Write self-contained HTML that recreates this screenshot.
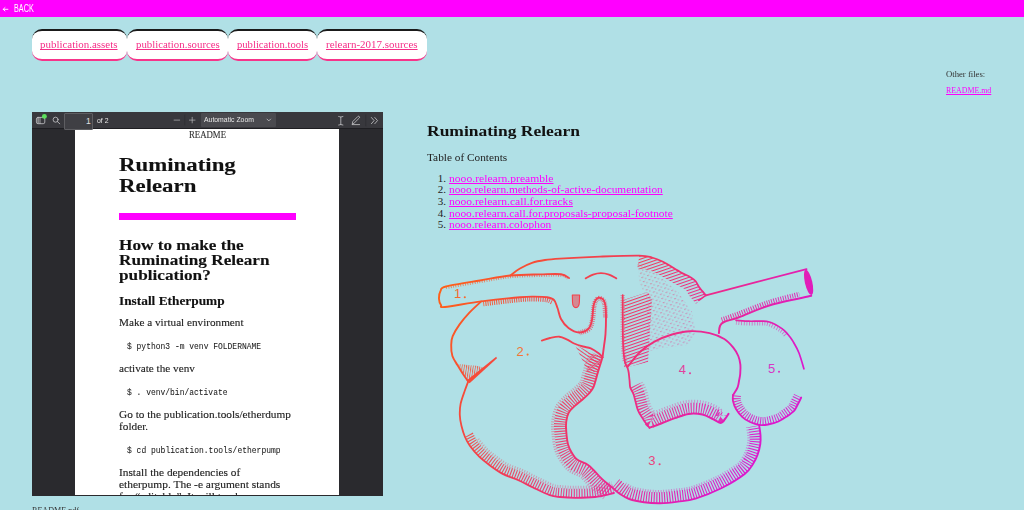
<!DOCTYPE html>
<html><head><meta charset="utf-8"><title>Ruminating Relearn</title>
<style>
html,body{margin:0;padding:0}
body{width:1024px;height:510px;overflow:hidden;background:#b0e0e6;position:relative;font-family:"Liberation Serif",serif}
.t{position:absolute;white-space:pre;line-height:normal;transform-origin:0 0;text-decoration-skip-ink:none}
#page .t{-webkit-text-stroke:0.12px currentColor}
#bar{position:absolute;left:0;top:0;width:1024px;height:16.6px;background:#f0f}
.tab{position:absolute;top:29px;height:28px;background:#fff;border-top:2px solid #1a1a1a;border-bottom:2.3px solid #f7348a;border-radius:10px;box-sizing:content-box}
#viewer{position:absolute;left:31.5px;top:111.5px;width:351.5px;height:384px;background:#2a2a2e;overflow:hidden}
#page{position:absolute;left:75px;top:129px;width:264px;height:366.4px;background:#fff;overflow:hidden}
#rule{position:absolute;left:44px;top:84.3px;width:177px;height:6.5px;background:#f0f}
</style></head><body>
<div id="bar"></div>
<svg style="position:absolute;left:0;top:0" width="12" height="16" viewBox="0 0 12 16" fill="none" stroke="#fff" stroke-width="0.9" stroke-linecap="round"><path d="M3.2,9.3 H7.9 M5,7.6 L3.2,9.3 L5,11"/></svg>
<div class="tab" style="left:31.5px;width:95px"></div>
<div class="tab" style="left:126.5px;width:101.5px"></div>
<div class="tab" style="left:228px;width:89px"></div>
<div class="tab" style="left:317px;width:109.5px"></div>
<div id="viewer"><div style="position:absolute;left:0;top:0;width:351.5px;height:16px;background:#38383d;box-shadow:0 0.6px 0 #18181b"></div>
<div style="position:absolute;left:32.8px;top:1.9px;width:29px;height:16.3px;z-index:2;box-sizing:border-box;background:#3f3f44;border:0.8px solid #5e5e62;border-radius:1px"></div>
<div style="position:absolute;left:169.6px;top:1.3px;width:74.7px;height:14.6px;background:#4a4a4f;border-radius:1px"></div>
<svg style="position:absolute;left:0;top:0" width="351.5" height="20" viewBox="31.5 111.5 351.5 20" fill="none" stroke="#cfcfd1" stroke-width="0.75" stroke-linecap="round">
<rect x="35.9" y="116.9" width="8.4" height="6.3" rx="1.6"/>
<path d="M39.6,117 V123.1 M37.3,117.6 V122.6 M38.3,117.6 V122.6" stroke-width="0.6"/>
<circle cx="43.9" cy="115.9" r="2.45" fill="#5cdf5c" stroke="none"/>
<circle cx="55.1" cy="119.2" r="2.5"/>
<path d="M56.9,121.1 L59.3,123.3"/>
<path d="M173.6,119.6 H179.2" stroke-width="0.6"/>
<path d="M184.3,114.5 V124.5" stroke="#2c2c30" stroke-width="0.7"/>
<path d="M188.9,119.6 H194.5 M191.7,116.8 V122.4" stroke-width="0.6"/>
<path d="M266.5,118.6 L268.3,120.4 L270.1,118.6"/>
<path d="M338.2,116 Q339.3,116.2 340.3,116.6 Q341.3,116.2 342.4,116 M340.3,116.6 V124 M338.2,124.5 Q339.3,124.3 340.3,124 Q341.3,124.3 342.4,124.5"/>
<path d="M351.8,123.4 L352.3,121 L357.3,116 Q358.1,115.4 358.8,116.1 Q359.4,116.8 358.8,117.5 L353.8,122.5 Z M351.7,124.1 H359.1"/>
<path d="M365.3,114.4 V125.3" stroke="#2c2c30" stroke-width="0.7"/>
<path d="M370.9,117 L373.6,120.1 L370.9,123.2 M374.3,117 L377,120.1 L374.3,123.2"/>
</svg>
</div>
<div id="page"><div id="rule"></div>
<div class="t" style="left:114.00px;top:0.00px;font-size:9.9px;color:#333;transform:scaleX(0.8881);">README</div>
<div class="t" style="left:44.40px;top:24.30px;font-size:19.8px;color:#111;font-weight:700;transform:scaleX(1.1547);">Ruminating</div>
<div class="t" style="left:44.40px;top:44.80px;font-size:19.8px;color:#111;font-weight:700;transform:scaleX(1.1547);">Relearn</div>
<div class="t" style="left:44.40px;top:108.00px;font-size:14.3px;color:#111;font-weight:700;transform:scaleX(1.2034);">How to make the</div>
<div class="t" style="left:44.40px;top:123.20px;font-size:14.3px;color:#111;font-weight:700;transform:scaleX(1.2034);">Ruminating Relearn</div>
<div class="t" style="left:44.40px;top:138.30px;font-size:14.3px;color:#111;font-weight:700;transform:scaleX(1.2034);">publication?</div>
<div class="t" style="left:44.40px;top:164.80px;font-size:12.65px;color:#111;font-weight:700;transform:scaleX(1.0553);">Install Etherpump</div>
<div class="t" style="left:44.40px;top:188.00px;font-size:10.56px;color:#222;transform:scaleX(1.0603);">Make a virtual environment</div>
<div class="t" style="left:52.00px;top:212.49px;font-size:8px;color:#1a1a1a;font-family:'Liberation Mono', monospace;transform:scale(0.9976,1.1300);-webkit-text-stroke:0.05px #1a1a1a;">$ python3 -m venv FOLDERNAME</div>
<div class="t" style="left:44.40px;top:234.00px;font-size:10.56px;color:#222;transform:scaleX(1.0613);">activate the venv</div>
<div class="t" style="left:52.00px;top:257.79px;font-size:8px;color:#1a1a1a;font-family:'Liberation Mono', monospace;transform:scale(0.9969,1.1300);-webkit-text-stroke:0.05px #1a1a1a;">$ . venv/bin/activate</div>
<div class="t" style="left:44.40px;top:280.40px;font-size:10.56px;color:#222;transform:scaleX(1.0708);">Go to the publication.tools/etherdump</div>
<div class="t" style="left:44.40px;top:292.30px;font-size:10.56px;color:#222;transform:scaleX(1.0708);">folder.</div>
<div class="t" style="left:52.00px;top:315.99px;font-size:8px;color:#1a1a1a;font-family:'Liberation Mono', monospace;transform:scale(0.9998,1.1300);-webkit-text-stroke:0.05px #1a1a1a;">$ cd publication.tools/etherpump</div>
<div class="t" style="left:44.40px;top:338.30px;font-size:10.56px;color:#222;transform:scaleX(1.0756);">Install the dependencies of</div>
<div class="t" style="left:44.40px;top:349.70px;font-size:10.56px;color:#222;transform:scaleX(1.0848);">etherpump. The -e argument stands</div>
<div class="t" style="left:44.40px;top:362.00px;font-size:10.56px;color:#222;transform:scaleX(1.0848);">for “editable”. It will track...</div>
</div>
<div class="t" style="left:13.60px;top:2.30px;font-size:9.4px;color:#fff;font-family:'Liberation Sans', sans-serif;transform:scale(0.7726,1.1000);">BACK</div>
<div class="t" style="left:40.10px;top:38.90px;font-size:9.9px;color:#f52d87;transform:scaleX(1.1085);text-decoration:underline;">publication.assets</div>
<div class="t" style="left:135.50px;top:38.90px;font-size:9.9px;color:#f52d87;transform:scaleX(1.0956);text-decoration:underline;">publication.sources</div>
<div class="t" style="left:237.00px;top:38.90px;font-size:9.9px;color:#f52d87;transform:scaleX(1.0753);text-decoration:underline;">publication.tools</div>
<div class="t" style="left:325.75px;top:38.90px;font-size:9.9px;color:#f52d87;transform:scaleX(1.1096);text-decoration:underline;">relearn-2017.sources</div>
<div class="t" style="left:427.40px;top:122.20px;font-size:15.4px;color:#111;font-weight:700;transform:scaleX(1.1361);">Ruminating Relearn</div>
<div class="t" style="left:427.40px;top:150.90px;font-size:11.0px;color:#222;transform:scaleX(1.0274);">Table of Contents</div>
<div class="t" style="left:437.80px;top:171.50px;font-size:11.0px;color:#222;">1.</div>
<div class="t" style="left:448.60px;top:171.50px;font-size:11.0px;color:#f0f;transform:scaleX(1.0558);text-decoration:underline;">nooo.relearn.preamble</div>
<div class="t" style="left:437.80px;top:183.23px;font-size:11.0px;color:#222;">2.</div>
<div class="t" style="left:448.60px;top:183.23px;font-size:11.0px;color:#f0f;transform:scaleX(1.0323);text-decoration:underline;">nooo.relearn.methods-of-active-documentation</div>
<div class="t" style="left:437.80px;top:194.96px;font-size:11.0px;color:#222;">3.</div>
<div class="t" style="left:448.60px;top:194.96px;font-size:11.0px;color:#f0f;transform:scaleX(1.0509);text-decoration:underline;">nooo.relearn.call.for.tracks</div>
<div class="t" style="left:437.80px;top:206.69px;font-size:11.0px;color:#222;">4.</div>
<div class="t" style="left:448.60px;top:206.69px;font-size:11.0px;color:#f0f;transform:scaleX(1.0377);text-decoration:underline;">nooo.relearn.call.for.proposals-proposal-footnote</div>
<div class="t" style="left:437.80px;top:218.42px;font-size:11.0px;color:#222;">5.</div>
<div class="t" style="left:448.60px;top:218.42px;font-size:11.0px;color:#f0f;transform:scaleX(1.0335);text-decoration:underline;">nooo.relearn.colophon</div>
<div class="t" style="left:946.00px;top:68.60px;font-size:8.8px;color:#333;transform:scaleX(0.9854);">Other files:</div>
<div class="t" style="left:946.00px;top:84.50px;font-size:8.8px;color:#f0f;transform:scaleX(0.8948);text-decoration:underline;">README.md</div>
<div class="t" style="left:31.80px;top:504.80px;font-size:8.8px;color:#333;transform:scaleX(0.9191);">README.pdf</div>
<div class="t" style="left:96.70px;top:115.80px;font-size:7.5px;color:#e8e8e8;font-family:'Liberation Sans', sans-serif;transform:scaleX(0.9158);">of 2</div>
<div class="t" style="left:86.00px;top:116.30px;font-size:8.6px;color:#e0e0e0;font-family:'Liberation Sans', sans-serif;z-index:3;">1</div>
<div class="t" style="left:204.30px;top:115.20px;font-size:7.5px;color:#e8e8e8;font-family:'Liberation Sans', sans-serif;transform:scaleX(0.9144);">Automatic Zoom</div>
<svg width="1024" height="510" viewBox="0 0 1024 510" style="position:absolute;left:0;top:0" fill="none" stroke-linecap="round" stroke-linejoin="round">
<defs>
<linearGradient id="g" gradientUnits="userSpaceOnUse" x1="440" y1="293" x2="739.3" y2="466.6">
<stop offset="0" stop-color="#ff6018"/><stop offset="0.225" stop-color="#f54a3c"/><stop offset="0.45" stop-color="#f03a5a"/><stop offset="0.675" stop-color="#ec2a8a"/><stop offset="1" stop-color="#dc18cc"/>
</linearGradient>
<pattern id="p1" width="10" height="3" patternUnits="userSpaceOnUse" patternTransform="rotate(-19)"><rect width="10" height="1.05" fill="#fff"/></pattern>
<pattern id="p2" width="3" height="10" patternUnits="userSpaceOnUse" patternTransform="rotate(-55)"><rect width="1" height="10" fill="#fff"/></pattern>
<pattern id="pd" width="6" height="4.4" patternUnits="userSpaceOnUse" patternTransform="rotate(-19)"><rect width="2.2" height="1.1" fill="#fff"/><rect x="3" y="2.2" width="1.5" height="1" fill="#fff"/></pattern>
<mask id="m1" maskUnits="userSpaceOnUse" x="0" y="0" width="1024" height="510"><rect width="1024" height="510" fill="url(#p1)"/></mask>
<mask id="m2" maskUnits="userSpaceOnUse" x="0" y="0" width="1024" height="510"><rect width="1024" height="510" fill="url(#p2)"/></mask>
<pattern id="p3" width="2.2" height="10" patternUnits="userSpaceOnUse" patternTransform="rotate(8)"><rect width="0.9" height="10" fill="#fff"/></pattern>
<mask id="m3" maskUnits="userSpaceOnUse" x="0" y="0" width="1024" height="510"><rect width="1024" height="510" fill="url(#p3)"/></mask>
<mask id="md" maskUnits="userSpaceOnUse" x="0" y="0" width="1024" height="510"><rect width="1024" height="510" fill="url(#pd)"/></mask>
</defs>
<g stroke="url(#g)">
<path stroke-width="1.9" d="M569.0,278.0 C567.7,277.4 565.8,274.8 561.0,274.2 C556.2,273.6 548.5,274.2 540.0,274.4 C531.5,274.6 520.3,274.5 510.3,275.5 C500.3,276.5 490.7,278.7 480.0,280.5 C469.3,282.3 452.6,284.8 446.0,286.5 C439.4,288.2 441.7,288.9 440.5,291.0 C439.3,293.1 438.9,296.7 439.0,299.0 C439.1,301.3 440.0,303.7 441.0,305.0 C442.0,306.3 438.3,307.6 445.0,307.0 C451.7,306.4 468.7,303.0 481.2,301.4 C493.7,299.8 511.1,298.0 520.0,297.2 C528.9,296.4 530.0,296.6 534.5,296.6 C539.0,296.6 543.8,296.6 547.0,297.2 C550.2,297.8 552.2,298.2 554.0,300.0 C555.8,301.8 556.3,304.8 557.5,308.0 C558.7,311.2 559.2,315.7 561.0,319.0 C562.8,322.3 565.5,325.8 568.5,328.0 C571.5,330.2 575.7,332.4 579.0,332.5 C582.3,332.6 586.3,330.9 588.5,328.8 C590.7,326.7 591.2,323.8 592.0,320.0 C592.8,316.2 592.8,309.4 593.5,306.0 C594.2,302.6 595.0,300.9 596.0,299.5 C597.0,298.1 598.2,297.7 599.5,297.8 C600.8,297.9 602.5,298.6 603.5,300.0 C604.5,301.4 605.1,303.0 605.5,306.0 C605.9,309.0 606.0,313.3 606.0,318.0 C606.0,322.7 605.8,329.3 605.5,334.0 C605.2,338.7 604.5,342.1 604.0,346.0 C603.5,349.9 602.8,355.4 602.5,357.3"/>
<path stroke-width="1.9" d="M602.5,357.3 C602.0,358.9 600.5,363.9 599.5,367.0 C598.5,370.1 597.8,372.8 596.8,376.1 C595.8,379.4 594.8,384.1 593.5,387.0 C592.2,389.9 590.9,391.3 589.0,393.5 C587.1,395.7 584.4,397.9 582.0,400.0 C579.6,402.1 577.0,403.7 574.8,405.9 C572.5,408.1 569.9,410.3 568.5,413.0 C567.1,415.7 566.6,418.8 566.2,422.0 C565.8,425.2 565.9,428.1 566.3,432.0 C566.6,435.9 567.3,441.8 568.3,445.3 C569.2,448.8 570.5,450.6 572.0,453.0 C573.5,455.4 574.5,457.5 577.1,459.5 C579.7,461.5 584.9,463.0 587.7,464.8 C590.5,466.6 591.9,468.4 594.0,470.5 C596.1,472.6 598.1,475.1 600.1,477.1 C602.1,479.1 604.0,480.7 606.0,482.5 C608.0,484.3 610.1,485.8 612.4,487.7 C614.7,489.6 617.2,492.1 620.0,494.0 C622.8,495.9 625.2,497.6 629.2,499.0 C633.2,500.4 638.9,501.5 644.0,502.2 C649.1,502.9 654.3,503.3 660.0,503.2 C665.7,503.1 672.1,502.4 678.0,501.6 C683.9,500.8 688.2,500.9 695.5,498.6 C702.8,496.3 713.6,492.1 721.8,488.0 C730.0,483.9 739.5,478.0 744.7,474.0 C749.9,470.0 750.9,467.2 753.0,464.0 C755.1,460.8 756.3,458.3 757.5,455.0 C758.7,451.7 759.8,447.3 760.3,444.0 C760.8,440.7 760.7,438.4 760.5,435.3 C760.3,432.2 759.4,427.1 759.2,425.5"/>
<path stroke-width="1.8" d="M510.3,275.5 C511.9,274.3 516.4,270.6 520.0,268.5 C523.6,266.4 527.8,264.2 532.0,262.8 C536.2,261.4 540.3,260.7 545.0,260.0 C549.7,259.3 550.8,259.2 560.0,258.6 C569.2,258.0 586.8,257.1 600.0,256.6 C613.2,256.1 630.6,255.4 639.3,255.6 C648.0,255.8 648.0,256.5 652.0,257.5 C656.0,258.5 658.2,259.4 663.0,261.8 C667.8,264.2 676.1,269.7 680.6,272.2 C685.1,274.7 687.5,275.5 690.0,277.0 C692.5,278.5 693.9,279.2 695.5,281.0 C697.1,282.8 697.7,285.2 699.4,287.6 C701.1,290.0 704.8,294.0 705.9,295.3"/>
<path stroke-width="1.8" d="M705.9,295.3 C722.7,290.9 789.7,273.5 806.5,269.1"/>
<path stroke-width="1.6" d="M705.9,295.3 C704.7,296.1 700.0,299.5 698.8,300.3"/>
<path stroke-width="2" d="M811.2,295.8 C804.3,297.4 782.0,301.6 770.0,305.2 C758.0,308.8 746.7,314.4 739.0,317.2 C731.3,320.0 727.2,320.5 724.0,322.0 C720.8,323.5 720.9,324.1 720.0,326.0 C719.1,327.9 719.1,331.9 718.9,333.1"/>
<path stroke-width="1.7" d="M736.1,320.4 C738.2,320.5 744.8,321.1 748.8,321.2 C752.8,321.3 756.6,321.1 760.0,321.2 C763.4,321.3 765.7,320.8 769.4,322.0 C773.1,323.2 778.9,326.5 782.0,328.6 C785.1,330.7 786.2,332.4 788.0,334.5 C789.8,336.6 791.2,338.3 793.0,341.4 C794.8,344.5 797.2,348.4 799.0,353.0 C800.8,357.6 803.1,366.2 803.9,368.8"/>
<path stroke-width="1.8" d="M801.2,397.5 C800.6,398.8 798.7,402.8 797.5,405.0 C796.3,407.2 796.0,408.8 794.1,410.8 C792.2,412.8 788.6,415.2 786.0,417.0 C783.4,418.8 781.4,420.2 778.4,421.5 C775.4,422.8 771.1,423.9 768.0,424.5 C764.9,425.1 762.6,425.3 759.6,424.9 C756.6,424.5 752.9,423.3 750.0,422.0 C747.1,420.7 744.7,419.3 742.4,417.1 C740.1,414.9 737.6,411.7 736.0,409.0 C734.4,406.3 733.5,403.3 733.0,401.0 C732.5,398.7 733.0,396.1 733.0,395.1"/>
<path stroke-width="1.9" d="M627.5,366.9 C629.6,364.4 635.6,356.2 640.0,352.0 C644.4,347.8 648.7,344.7 654.0,341.8 C659.3,338.9 666.0,336.3 672.0,334.5 C678.0,332.7 683.9,331.4 690.2,331.2 C696.5,331.0 703.9,331.8 709.6,333.1 C715.3,334.4 720.3,336.6 724.3,339.0 C728.2,341.4 731.0,344.8 733.3,347.6 C735.6,350.4 737.1,353.1 738.3,356.0 C739.5,358.9 740.1,361.9 740.4,364.9 C740.7,367.9 740.4,371.3 740.2,374.0 C740.0,376.7 739.4,378.8 739.0,381.0 C738.6,383.2 738.6,384.9 737.6,387.3 C736.6,389.7 733.8,393.8 733.0,395.1"/>
<path stroke-width="1.8" d="M622.7,295.2 C622.7,301.0 622.7,320.9 622.8,330.0 C622.9,339.1 623.0,344.7 623.4,350.0 C623.8,355.3 624.2,358.7 625.0,362.0 C625.8,365.3 627.5,367.0 628.2,370.0 C629.0,373.0 629.1,377.0 629.5,380.0 C629.9,383.0 629.6,385.4 630.3,387.8 C631.0,390.2 632.5,391.0 633.7,394.7 C635.0,398.4 636.2,405.7 637.8,409.8 C639.4,413.9 641.3,416.4 643.3,419.4 C645.2,422.4 648.5,426.3 649.5,427.7"/>
<path stroke-width="2" d="M649.5,427.7 C651.5,427.0 657.0,425.1 661.2,423.5 C665.4,421.9 670.3,419.7 674.9,418.1 C679.5,416.5 684.1,414.5 688.7,413.9 C693.3,413.3 698.3,413.7 702.4,414.6 C706.5,415.5 710.3,418.0 713.4,419.4 C716.5,420.8 719.0,423.0 720.9,422.9 C722.8,422.8 723.7,420.5 725.0,419.0 C726.3,417.5 727.9,414.8 728.5,413.9"/>
<path stroke-width="1.9" d="M541.8,340.6 C543.2,340.2 547.1,338.6 550.0,338.0 C552.9,337.4 556.5,336.4 559.4,336.7 C562.3,337.0 564.8,338.5 567.3,339.6 C569.8,340.7 571.5,342.4 574.1,343.5 C576.7,344.6 580.2,345.7 583.0,346.5 C585.8,347.3 588.2,347.3 590.8,348.4 C593.4,349.5 596.6,351.8 598.6,353.3 C600.6,354.8 601.9,356.6 602.5,357.3"/>
<path stroke-width="1.9" d="M481.2,301.4 C479.2,303.3 473.0,308.8 469.4,312.6 C465.8,316.4 462.4,320.5 459.6,324.4 C456.8,328.3 454.1,332.8 452.7,336.2 C451.3,339.6 451.2,341.7 451.2,345.0 C451.1,348.3 451.3,352.6 452.4,356.0 C453.5,359.4 455.8,362.3 457.6,365.3 C459.4,368.3 461.2,371.3 463.0,374.0 C464.8,376.7 467.3,380.2 468.2,381.5"/>
<path stroke-width="1.8" d="M468.2,381.5 C467.6,383.2 465.8,387.8 464.5,391.5 C463.2,395.2 461.4,400.0 460.6,403.9 C459.8,407.8 459.7,411.2 459.8,414.9 C459.9,418.6 460.6,422.3 461.5,426.0 C462.4,429.7 463.6,433.7 465.0,437.0 C466.4,440.3 467.6,442.7 470.0,446.0 C472.4,449.3 475.9,453.4 479.2,456.7 C482.5,459.9 486.1,462.6 490.0,465.5 C493.9,468.4 498.0,471.4 502.7,473.9 C507.4,476.3 513.4,477.9 518.4,480.2 C523.4,482.5 527.8,485.0 533.0,487.5 C538.2,490.0 545.3,493.6 549.8,495.2 C554.3,496.8 555.8,496.6 560.0,497.0 C564.2,497.4 569.2,497.8 575.0,497.8 C580.8,497.8 588.5,497.8 595.0,497.0 C601.5,496.2 610.8,493.7 614.0,493.0"/>
<path stroke-width="1.9" d="M585.7,278.3 C586.9,277.7 590.5,275.5 593.0,274.6 C595.5,273.7 598.3,273.1 601.0,273.1 C603.7,273.1 606.5,273.7 609.0,274.6 C611.5,275.5 615.1,277.7 616.3,278.3"/>
</g>
<g stroke="url(#g)" stroke-linecap="butt" stroke-linejoin="miter">
<path stroke-width="5" stroke-dasharray="1 1.2" opacity="0.9" d="M483.3,303.8 C489.5,303.1 511.7,300.4 520.2,299.6 C528.8,298.8 530.1,299.0 534.5,299.0 C538.9,299.0 543.6,299.3 546.6,299.8 C549.5,300.3 551.2,301.6 552.1,301.9"/>
<path stroke-width="2.4" stroke-dasharray="0.8 1.6" opacity="0.75" d="M446.2,287.9 C451.9,286.9 469.6,283.7 480.2,281.9 C490.9,280.1 500.2,278.1 510.1,277.1 C520.1,276.1 531.6,276.0 540.0,275.8 C548.5,275.5 556.3,275.2 560.9,275.6 C565.4,276.0 566.4,277.8 567.5,278.3"/>
<path stroke-width="12" stroke-dasharray="1.1 1.4" opacity="0.9" d="M596.8,355.5 C596.3,357.1 594.7,362.1 593.8,365.3 C592.8,368.4 592.0,371.2 591.1,374.4 C590.1,377.6 589.1,382.0 588.0,384.5 C586.9,387.1 586.2,387.7 584.5,389.5 C582.8,391.3 580.4,393.5 578.1,395.5 C575.7,397.5 573.1,399.1 570.6,401.6 C568.2,404.0 564.9,406.9 563.2,410.2 C561.5,413.5 560.7,417.6 560.2,421.3 C559.8,425.0 559.9,428.3 560.3,432.5 C560.7,436.8 561.4,442.9 562.5,446.9 C563.6,450.8 565.1,453.3 566.9,456.2 C568.7,459.1 570.6,462.0 573.5,464.3 C576.4,466.6 581.7,468.1 584.4,469.8 C587.1,471.6 587.9,472.8 589.8,474.8 C591.7,476.7 593.8,479.3 595.9,481.3 C597.9,483.4 600.0,485.2 602.1,487.0 C604.2,488.9 607.5,491.5 608.6,492.4"/>
<path stroke-width="3" stroke-dasharray="1 1.5" opacity="0.45" d="M589.6,353.3 C589.1,354.9 587.5,359.9 586.6,363.1 C585.6,366.2 584.8,369.2 583.9,372.2 C583.0,375.3 582.0,379.4 581.2,381.5 C580.4,383.5 580.2,383.2 578.9,384.6 C577.5,385.9 575.4,387.9 573.1,389.8 C570.9,391.8 568.2,393.4 565.4,396.2 C562.7,399.0 558.7,402.6 556.6,406.6 C554.5,410.7 553.4,416.0 552.8,420.4 C552.2,424.9 552.4,428.5 552.9,433.2 C553.3,437.9 554.0,444.4 555.3,448.8 C556.5,453.3 558.2,456.5 560.5,460.1 C562.8,463.7 565.7,467.6 569.0,470.3 C572.3,473.0 577.8,474.5 580.3,476.1 C582.9,477.7 582.8,478.3 584.5,480.1 C586.2,481.8 588.4,484.5 590.6,486.6 C592.7,488.8 595.0,490.8 597.2,492.7 C599.4,494.6 602.8,497.3 603.9,498.2"/>
<path stroke-width="9" stroke-dasharray="1.1 1.5" opacity="0.9" d="M468.9,434.8 C469.7,436.2 471.4,440.3 473.7,443.4 C475.9,446.5 479.2,450.4 482.3,453.5 C485.5,456.6 488.9,459.1 492.7,461.9 C496.4,464.6 500.2,467.5 504.8,469.9 C509.4,472.3 515.2,473.8 520.2,476.1 C525.3,478.4 529.8,481.0 534.9,483.4 C540.1,485.9 547.0,489.4 551.3,491.0 C555.5,492.5 556.5,492.1 560.5,492.5 C564.4,492.9 569.3,493.3 575.0,493.3 C580.7,493.3 588.1,493.3 594.5,492.5 C600.8,491.7 610.0,489.3 613.1,488.6"/>
<path stroke-width="3" stroke-dasharray="1 1.6" opacity="0.4" d="M478.0,439.2 C479.4,440.8 483.5,446.2 486.5,449.2 C489.6,452.2 492.7,454.5 496.2,457.0 C499.7,459.6 503.1,462.3 507.5,464.6 C511.9,466.8 517.7,468.4 522.7,470.6 C527.7,472.9 532.4,475.6 537.5,478.0 C542.6,480.5 549.4,483.9 553.3,485.3 C557.2,486.7 557.5,486.2 561.1,486.6 C564.7,486.9 569.6,487.3 575.0,487.3 C580.4,487.3 587.6,487.3 593.7,486.6 C599.9,485.8 608.8,483.4 611.8,482.7"/>
<path stroke-width="11" stroke-dasharray="1.1 1.5" opacity="0.95" d="M615.9,483.5 C617.1,484.5 620.6,487.7 623.1,489.4 C625.6,491.2 627.4,492.6 631.0,493.8 C634.6,495.0 639.9,496.1 644.7,496.8 C649.6,497.4 654.5,497.8 659.9,497.7 C665.3,497.6 671.6,496.9 677.3,496.1 C683.0,495.4 686.9,495.5 693.9,493.3 C700.9,491.2 711.4,487.0 719.3,483.1 C727.3,479.1 736.5,473.3 741.3,469.6 C746.2,465.9 746.6,463.7 748.4,460.9 C750.3,458.2 751.3,456.1 752.3,453.1 C753.4,450.2 754.4,446.1 754.9,443.2 C755.3,440.3 755.2,438.5 755.0,435.6 C754.8,432.8 754.0,427.8 753.7,426.2"/>
<path stroke-width="2.5" stroke-dasharray="1 1.6" opacity="0.45" d="M625.7,483.5 C627.0,484.2 629.8,486.5 633.1,487.6 C636.4,488.8 641.2,489.7 645.6,490.3 C650.1,490.9 654.6,491.3 659.8,491.2 C664.9,491.1 671.1,490.4 676.5,489.7 C681.8,489.0 685.3,489.2 691.9,487.1 C698.6,485.1 708.9,481.0 716.4,477.3 C724.0,473.5 732.9,467.8 737.4,464.5 C741.8,461.2 741.6,459.6 743.0,457.3 C744.5,455.0 745.3,453.4 746.2,450.9 C747.1,448.4 748.1,444.7 748.4,442.2 C748.8,439.7 748.7,438.5 748.5,436.0 C748.3,433.5 747.5,428.6 747.3,427.1"/>
<path stroke-width="11" stroke-dasharray="1.1 1.5" opacity="0.9" d="M635.2,385.4 C635.8,386.6 637.6,389.2 638.9,392.9 C640.2,396.7 641.4,403.9 642.9,407.8 C644.4,411.7 646.6,414.0 647.9,416.4 C649.2,418.8 648.8,422.0 650.7,422.3 C652.6,422.7 655.5,419.9 659.3,418.4 C663.0,416.8 668.3,414.6 673.1,412.9 C677.9,411.3 682.9,409.1 688.0,408.4 C693.1,407.8 699.0,408.2 703.6,409.2 C708.2,410.2 712.8,413.0 715.7,414.4 C718.5,415.7 719.8,417.3 720.7,417.4 C721.6,417.5 721.1,415.4 721.2,415.0"/>
<path stroke-width="3" stroke-dasharray="1 1.8" opacity="0.4" d="M641.5,382.3 C642.2,383.7 644.2,386.8 645.5,390.7 C646.9,394.5 648.1,401.6 649.5,405.3 C650.8,408.9 653.3,410.9 653.8,412.6 C654.2,414.3 651.8,415.6 652.3,415.5 C652.8,415.4 653.7,413.3 656.8,411.8 C659.9,410.3 665.7,408.0 670.8,406.3 C675.8,404.6 681.4,402.1 687.1,401.5 C692.8,400.9 699.9,401.3 705.1,402.4 C710.3,403.5 716.0,406.7 718.5,408.0 C721.1,409.3 720.8,410.1 720.5,410.4 C720.1,410.7 717.1,410.0 716.4,409.9"/>
<path stroke-width="8" stroke-dasharray="1 1.5" opacity="0.9" d="M797.6,395.7 C797.0,397.0 795.0,401.1 794.0,403.1 C792.9,405.2 792.9,406.3 791.2,408.0 C789.5,409.8 786.1,412.1 783.7,413.7 C781.4,415.3 779.6,416.7 776.9,417.8 C774.1,419.0 770.1,420.0 767.3,420.6 C764.5,421.1 762.8,421.3 760.2,420.9 C757.5,420.6 754.2,419.5 751.7,418.4 C749.1,417.2 747.2,416.1 745.1,414.2 C743.1,412.3 740.8,409.3 739.5,407.0 C738.1,404.6 737.3,402.1 736.9,400.2 C736.5,398.2 737.0,395.9 737.0,395.1"/>
<path stroke-width="4.8" stroke-dasharray="1 1.4" opacity="0.9" d="M721.6,319.7 C724.4,318.8 730.2,316.9 738.2,313.9 C746.1,311.0 759.1,305.5 769.3,302.2 C779.5,298.9 794.4,295.5 799.4,294.2"/>
<path stroke-width="5" stroke-dasharray="0.8 1.1" opacity="0.75" d="M579.2,333.0 C580.8,332.3 586.6,331.3 588.8,329.2 C591.1,327.0 591.6,324.0 592.5,320.1 C593.3,316.3 593.3,309.5 594.0,306.1 C594.6,302.7 595.5,301.1 596.4,299.8 C597.3,298.5 598.4,298.2 599.5,298.3 C600.6,298.4 602.2,299.0 603.1,300.3 C604.0,301.6 604.6,303.1 605.0,306.1 C605.4,309.0 605.4,316.0 605.5,318.0"/>
<path stroke-width="4.4" stroke-dasharray="0.8 1.8" opacity="0.6" d="M736.0,322.6 C738.1,322.7 744.7,323.3 748.7,323.4 C752.7,323.5 756.6,323.3 759.9,323.4 C763.2,323.5 765.2,322.9 768.7,324.1 C772.2,325.3 777.8,328.4 780.8,330.4 C783.7,332.4 785.5,335.1 786.5,336.1"/>
<path stroke-width="4.5" stroke-dasharray="0.8 1.6" opacity="0.55" d="M622.7,295.2 C622.7,301.0 622.7,320.9 622.8,330.0 C622.9,339.1 623.0,344.7 623.4,350.0 C623.8,355.3 624.7,360.0 625.0,362.0"/>
</g>
<g fill="url(#g)" stroke="none">
<path mask="url(#m1)" d="M639.3,255.6 L652.0,257.5 L663.0,261.8 L680.6,272.2 L690.0,277.0 L695.5,281.0 L699.4,287.6 L705.9,295.3 L696.0,303.7 L688.9,295.2 L685.8,289.6 L683.4,288.2 L674.2,283.5 L657.1,273.4 L648.7,270.1 L637.4,268.5 Z"/>
<path mask="url(#m1)" d="M623.5,300 L648,292 L652,300 L650,330 L648,362 L624,368 Z"/>
<path mask="url(#md)" opacity="0.42" d="M637,262 L655,272 L678,292 L692,312 L696,332 L688,345 L660,348 L648,352 L646,296 L640,285 Z"/>
<path mask="url(#m2)" opacity="0.9" d="M575,345 L602,357 L598,372 L588,372 Z"/>
<path mask="url(#m3)" opacity="0.85" d="M458,364 L468.2,381.5 L485,368 L478,366 Z"/>
</g>
<path fill="url(#g)" d="M466.6,380.6 L496.2,356.8 L497,358.2 L469.6,383.2 Z"/>
<ellipse cx="808.6" cy="282.4" rx="3.7" ry="12.9" transform="rotate(-13 808.6 282.4)" fill="url(#g)"/>
<path d="M572.3,295 L579.6,295 L579.4,302 C579.2,305.5 577.8,307.6 575.9,307.6 C574,307.6 572.6,305.5 572.5,302 Z" fill="url(#g)" fill-opacity="0.55" stroke="url(#g)" stroke-width="1.1"/>
<g font-family="Liberation Sans, sans-serif" font-size="13">
<text x="454.0" y="298.2" fill="#f86a2a">1</text><circle cx="464.8" cy="297.2" r="1.05" fill="#f86a2a"/>
<text x="516.6" y="355.6" fill="#f47536">2</text><circle cx="527.6" cy="354.6" r="1.05" fill="#f47536"/>
<text x="648.2" y="465.3" fill="#e8457c">3</text><circle cx="659.6" cy="464.3" r="1.05" fill="#e8457c"/>
<text x="678.8" y="374.2" fill="#e2409c">4</text><circle cx="690.0" cy="373.2" r="1.05" fill="#e2409c"/>
<text x="768.0" y="372.8" fill="#d638c4">5</text><circle cx="779.0" cy="371.8" r="1.05" fill="#d638c4"/>
</g></svg>
</body></html>
